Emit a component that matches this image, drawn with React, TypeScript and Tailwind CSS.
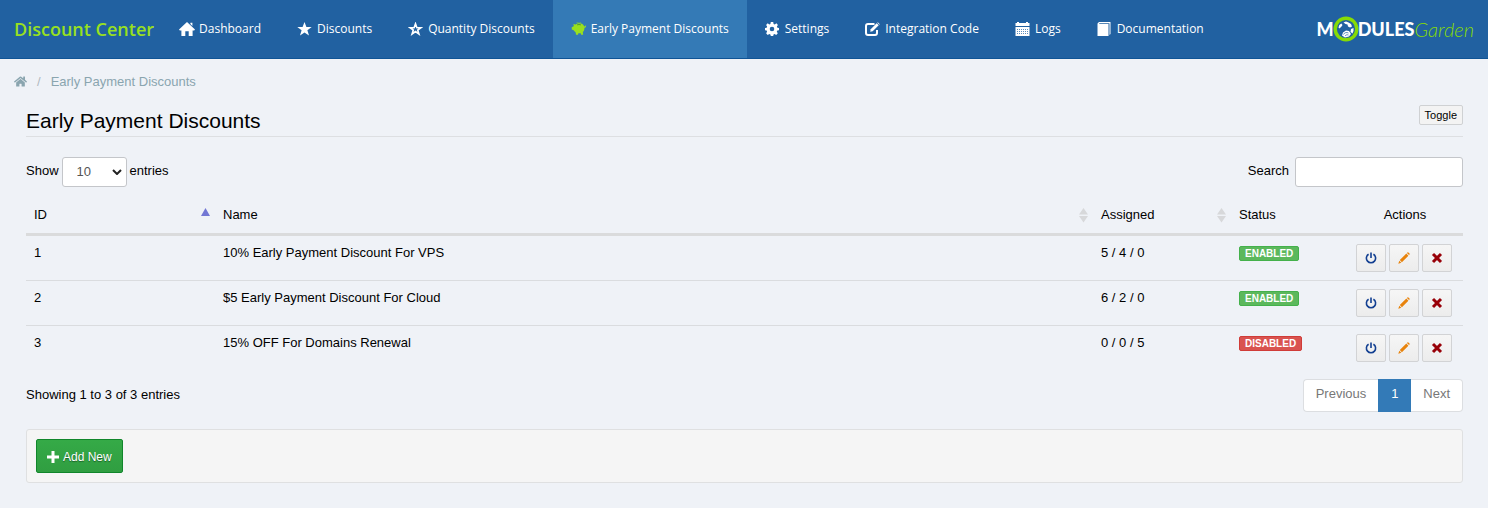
import { useState } from "react";
import type { ReactNode } from "react";
import { FaHome } from "react-icons/fa";

type Discount = {
  id: number;
  name: string;
  assigned: string;
  enabled: boolean;
};

const DISCOUNTS: Discount[] = [
  { id: 1, name: "10% Early Payment Discount For VPS", assigned: "5 / 4 / 0", enabled: true },
  { id: 2, name: "$5 Early Payment Discount For Cloud", assigned: "6 / 2 / 0", enabled: true },
  { id: 3, name: "15% OFF For Domains Renewal", assigned: "0 / 0 / 5", enabled: false },
];

const NAV = [
  { label: "Dashboard", icon: <HomeIcon /> },
  { label: "Discounts", icon: <StarIcon /> },
  { label: "Quantity Discounts", icon: <StarEmptyIcon /> },
  { label: "Early Payment Discounts", icon: <PiggyIcon />, active: true },
  { label: "Settings", icon: <CogIcon /> },
  { label: "Integration Code", icon: <EditIcon /> },
  { label: "Logs", icon: <CalendarIcon /> },
  { label: "Documentation", icon: <BookIcon /> },
];

export default function App() {
  const [search, setSearch] = useState("");
  const rows = DISCOUNTS.filter((d) => d.name.toLowerCase().includes(search.toLowerCase()));

  return (
    <div className="min-h-screen bg-[#eff2f7] font-['Liberation_Sans',Arial,sans-serif] text-[13px] leading-[18px] text-black">
      <header className="flex h-[59px] items-stretch border-b border-[#0f5496] bg-[#2161a1] font-['Open_Sans',sans-serif]">
        <a href="#" className="flex items-center pr-[7px] pl-[14px] text-[18px] font-semibold whitespace-nowrap text-[#98e01f]">
          Discount Center
        </a>
        <nav className="flex items-stretch">
          {NAV.map((item) => (
            <a
              key={item.label}
              href="#"
              className={`flex items-center gap-1 px-[18px] text-[12px] font-medium whitespace-nowrap text-white ${item.active ? "bg-[#347ab6]" : ""}`}
            >
              <span className="w-4">{item.icon}</span>
              {item.label}
            </a>
          ))}
        </nav>
        <Logo />
      </header>

      <nav aria-label="Breadcrumb" className="flex h-[45px] items-center pl-[14px] text-[#8aa5af]">
        <a href="#" aria-label="Home">
          <FaHome className="size-[13px]" />
        </a>
        <span className="px-[10px] text-[#b0b9bf]">/</span>
        <span>Early Payment Discounts</span>
      </nav>

      <main className="pr-[25px] pl-[26px]">
        <div className="flex h-[33px] items-start justify-between border-b border-[#dddfe2]">
          <h1 className="pt-[3px] text-[21px] leading-[28px]">Early Payment Discounts</h1>
          <button
            type="button"
            className="mt-px h-5 rounded-[2px] border border-[#cfd1d3] bg-[#f3f3f3] px-[5px] text-[11px] leading-[18px]"
          >
            Toggle
          </button>
        </div>

        <div className="mt-5 flex h-[30px] items-stretch justify-between">
          <label className="flex items-center gap-[3px]">
            <span className="pb-[2px]">Show</span>
            <span className="relative flex h-[30px]">
              <select
                defaultValue="10"
                className="w-[65px] appearance-none rounded-[3px] border border-[#c4c6ca] bg-white pl-[14px] text-[#555]"
              >
                <option>10</option>
                <option>25</option>
                <option>50</option>
              </select>
              <svg
                viewBox="0 0 10 6"
                className="pointer-events-none absolute top-3 right-[5px] h-[6px] w-[10px] fill-none stroke-[#222] stroke-2"
              >
                <path d="M1 1l4 4 4-4" />
              </svg>
            </span>
            <span className="pb-[2px]">entries</span>
          </label>
          <label className="flex items-center gap-[6px]">
            <span className="pb-[2px]">Search</span>
            <input
              value={search}
              onChange={(e) => setSearch(e.target.value)}
              className="h-[30px] w-[168px] rounded-[3px] border border-[#c4c6ca] bg-white px-2"
            />
          </label>
        </div>

        <table className="mt-[10px] w-full table-fixed border-collapse text-left">
          <thead>
            <tr className="border-b-[3px] border-[#dadbdc]">
              <Th className="w-[189px]" sort="asc">ID</Th>
              <Th sort="both">Name</Th>
              <Th className="w-[138px]" sort="both">Assigned</Th>
              <Th className="w-[116px]">Status</Th>
              <th className="w-[116px] px-2 text-center font-normal">Actions</th>
            </tr>
          </thead>
          <tbody>
            {rows.map((d) => (
              <tr key={d.id} className="border-b border-[#dadcdf] align-top last:border-b-0">
                <td className="p-2">{d.id}</td>
                <td className="p-2">{d.name}</td>
                <td className="p-2">{d.assigned}</td>
                <td className="px-2 py-[10px]">
                  <span
                    className={`block w-fit rounded-[2px] border px-[5px] text-[10px] leading-[13px] font-bold text-white ${d.enabled ? "border-[#44b14b] bg-[#5cb85c]" : "border-[#d03c38] bg-[#d9534f]"}`}
                  >
                    {d.enabled ? "ENABLED" : "DISABLED"}
                  </span>
                </td>
                <td className="py-2 pr-[11px]">
                  <div className="flex justify-end gap-[3px]">
                    <ActionButton label="Toggle status">
                      <svg viewBox="0 0 12 12" className="size-3 fill-none stroke-[#123f91] stroke-[1.6]">
                        <path d="M3.600 2.200a4.600 4.600 0 1 0 4.800 0M6 .500v5.500" />
                      </svg>
                    </ActionButton>
                    <ActionButton label="Edit">
                      <svg viewBox="0 0 12 12" className="size-3 fill-[#e8830c]">
                        <path d="M.3 11.700l1-3 2 2zM1.800 8.100l6.500-6.500 2.100 2.100-6.500 6.500zM8.900 1l.5-.5q.5-.5 1 0l1.100 1.100q.5.500 0 1l-.5.500z" />
                      </svg>
                    </ActionButton>
                    <ActionButton label="Delete">
                      <svg viewBox="0 0 12 12" className="size-3 fill-none stroke-[#980008] stroke-3">
                        <path d="M2 2l8 8M10 2l-8 8" />
                      </svg>
                    </ActionButton>
                  </div>
                </td>
              </tr>
            ))}
          </tbody>
        </table>

        <div className="mt-[9px] flex items-start justify-between">
          <p className="pt-[7px]">Showing 1 to {rows.length} of {rows.length} entries</p>
          <div className="flex h-[33px] text-[#777]">
            <button type="button" className="rounded-l-[4px] border border-r-0 border-[#dcdee1] bg-white px-3 pb-[2px]">
              Previous
            </button>
            <button type="button" className="w-[33px] bg-[#337ab7] pb-[2px] text-white">1</button>
            <button type="button" className="rounded-r-[4px] border border-l-0 border-[#dcdee1] bg-white px-3 pb-[2px]">
              Next
            </button>
          </div>
        </div>

        <div className="mt-[17px] rounded-[3px] border border-[#dfe0e1] bg-[#f5f5f5] p-[9px]">
          <button
            type="button"
            className="flex h-[34px] items-center gap-1 rounded-[2px] border border-[#11862b] bg-linear-to-b from-[#35aa47] to-[#309e41] px-[10px] pt-[3px] text-[12px] text-white text-shadow-[0_1px_1px_#0006]"
          >
            <svg viewBox="0 0 12 12" className="size-3 fill-none stroke-white stroke-3">
              <path d="M6 0v12M0 6h12" />
            </svg>
            Add New
          </button>
        </div>
      </main>
    </div>
  );
}

function Th({ children, className, sort }: { children: ReactNode; className?: string; sort?: "asc" | "both" }) {
  return (
    <th className={`h-[37px] px-2 font-normal ${className ?? ""}`}>
      <div className="flex items-center justify-between">
        {children}
        {sort && (
          <svg viewBox="0 0 9 16" className="-mr-[3px] h-4 w-[9px]">
            {sort === "asc" ? (
              <path d="M0 9l4.5-8L9 9z" fill="#7277d4" />
            ) : (
              <path d="M0 7.500l4.500-6.500L9 7.500zM0 9h9l-4.500 6.500z" fill="#d7d8da" />
            )}
          </svg>
        )}
      </div>
    </th>
  );
}

function ActionButton({ label, children }: { label: string; children: ReactNode }) {
  return (
    <button
      type="button"
      aria-label={label}
      className="flex h-7 w-[30px] items-center justify-center rounded-[2px] border border-[#d2d3d5] bg-linear-to-b from-[#f6f6f6] to-[#ececec]"
    >
      {children}
    </button>
  );
}

function Logo() {
  return (
    <a href="#" aria-label="ModulesGarden" className="mr-[14px] ml-auto flex items-center font-['Lato',sans-serif] leading-none whitespace-nowrap">
      <span className="text-[18px] font-black text-white">M</span>
      <svg viewBox="0 0 26 26" className="-mx-px size-[26px]">
        <circle cx="13" cy="13" r="10.8" fill="#2161a1" stroke="#86db05" strokeWidth="3.4" />
        <path
          d="M5.500 11.500l.8-2.500 2-1.500L9.500 9l-1 1.500-2 2zM10.500 6.500l2.500-1 2.500 1 2.500 1.500 1 2.500-2 1-2-1-.5-2-2-.5zM18 13l2.500-1v3l-1 2.500-2-1.500zM9 19.500l1-3 3-2 3 .5 2 3-2 2.500-4 1z"
          fill="#fff"
        />
        <path d="M10.500 18.500c1-2 3-2.500 5-1.500M12 20c1-1.200 2-1.500 3.500-1" fill="none" stroke="#2161a1" strokeWidth=".7" />
      </svg>
      <span className="text-[18px] font-black text-white">DULES</span>
      <span className="text-[20px] font-light text-[#86db05] italic">Garden</span>
    </a>
  );
}

function HomeIcon() {
  return (
    <svg viewBox="0 0 16 14" className="h-[14px] w-4 fill-white">
      <path d="M8 0l8 7.500-.8.900H13.600V14H9.700V9.200H6.300V14H2.400V8.400H.8L0 7.500zM11.400.7h2v3.200l-2-1.900z" />
    </svg>
  );
}

function StarIcon() {
  return (
    <svg viewBox="0 0 15 14" className="h-[14px] w-[15px] fill-white">
      <path d="M7.500 0l1.900 5H14.700l-4.300 3.300L12 13.500 7.500 10.400 3 13.500l1.600-5.200L.3 5h5.300z" />
    </svg>
  );
}

function StarEmptyIcon() {
  return (
    <svg viewBox="0 0 15 14" className="h-[14px] w-[15px] fill-none stroke-white stroke-[1.6]">
      <path d="M7.500 1.800l1.400 3.900h4.100L9.700 8.100l1.200 3.900-3.400-2.400L4.100 12l1.200-3.900L2 5.700h4.100z" />
    </svg>
  );
}

function PiggyIcon() {
  return (
    <svg viewBox="0 0 17 14" className="h-[14px] w-4 fill-[#98e01f]">
      <path d="M2.500 1.800L5 2.300C6 1.400 7.500 1 9 1c2.400 0 4.200 1.300 5 3.200.7.200 1-.2 1.200-.9l.9.300c-.1 1.300-.8 2.100-1.800 2.200.1 1.900-.6 3.400-1.700 4.500l.3 2.700H10.800l-.5-1.500H7.800L7.500 13H5.300L5 10.600C4 10 3.300 9.200 2.800 8.400L.8 7.500V4.900l1.500-.4L3 3.400zM6 0h4.500l.4.900C9.500.300 7.500.300 6 .900z" />
      <path d="M6.500 2.600c1.300-.5 2.800-.5 4 0" fill="none" stroke="#2f7430" strokeWidth=".7" />
    </svg>
  );
}

function CogIcon() {
  return (
    <svg viewBox="0 0 14 14" className="size-[14px] fill-white">
      <path
        fillRule="evenodd"
        d="M5.800 0h2.400l.4 1.900 1.100.5L11.400 1.300l1.500 1.600-1 1.600.5 1.200 1.600.3v2.200l-1.700.4-.5 1.100 1 1.600-1.600 1.600-1.600-1-1.100.5L8.200 14H5.800l-.4-1.600-1.100-.5-1.600 1-1.600-1.600 1-1.600-.5-1.100L0 8.200V6l1.700-.3.400-1.200-1-1.600 1.600-1.600 1.600 1.100 1.100-.5zM7 4.700a2.300 2.300 0 1 0 0 4.600 2.300 2.300 0 0 0 0-4.600z"
      />
    </svg>
  );
}

function EditIcon() {
  return (
    <svg viewBox="0 0 15 14" className="h-[14px] w-[15px] fill-none stroke-white">
      <path d="M9.500 2H3Q1 2 1 4v7q0 2 2 2h7q2 0 2-2V8" strokeWidth="2" />
      <path d="M5.200 9.800l.5-2.600L11.700 1.200l2 2-6 6z" fill="#fff" stroke="none" />
      <path d="M12.300.7l.5-.5 2 2-.5.500z" fill="#fff" stroke="none" />
    </svg>
  );
}

function CalendarIcon() {
  return (
    <svg viewBox="0 0 15 14" className="h-[14px] w-[15px] fill-white">
      <path d="M.5 1H2V0h2v1h7V0h2v1h1.500v3H.5zM.5 5h14v9H.5z" />
      <path d="M2 7.500h11M2 9.500h11M2 11.500h11" fill="none" stroke="#5c8dbe" strokeDasharray="1 1" />
    </svg>
  );
}

function BookIcon() {
  return (
    <svg viewBox="0 0 14 14" className="size-[14px] fill-white">
      <path d="M.5 1.500L2 0h11.500v12l-1 1V1.200H2.500L2 2h9.500v12H.5z" />
    </svg>
  );
}
